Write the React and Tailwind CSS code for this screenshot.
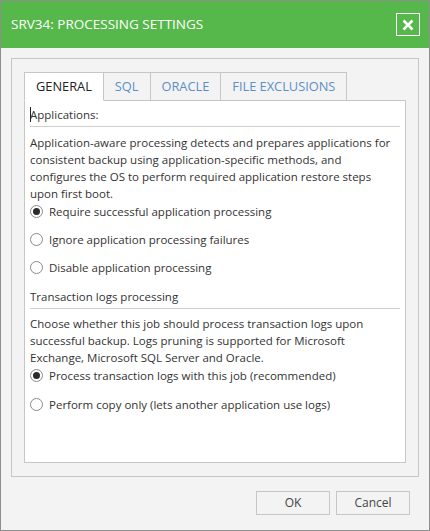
import React, { useState } from "react";

const tabs = ["GENERAL", "SQL", "ORACLE", "FILE EXCLUSIONS"];

const Radio = ({ checked, label, onClick }) => (
  <div className="flex items-center h-[17px] cursor-pointer" onClick={onClick}>
    <span className="w-[13px] h-[13px] rounded-full border border-[#8a8a8a] bg-white flex items-center justify-center shrink-0">
      {checked && <span className="w-[7px] h-[7px] rounded-full bg-[#2b2b2b]" />}
    </span>
    <span className="ml-[6px]">{label}</span>
  </div>
);

const SectionTitle = ({ children, caret }) => (
  <div className="relative border-b border-[#cfcfcf] pb-[3px] mr-[5px]">
    {caret && <span className="absolute left-0 top-[1px] w-px h-[15px] bg-[#222]" />}
    {children}
  </div>
);

export default function App() {
  const [tab, setTab] = useState("GENERAL");
  const [appMode, setAppMode] = useState("require");
  const [logMode, setLogMode] = useState("process");

  return (
    <div
      className="w-[430px] h-[531px] border border-[#8f8f8f] bg-[#f3f3f3] flex flex-col text-[11.5px] text-[#333]"
      style={{ fontFamily: '"Open Sans", "Noto Sans", sans-serif' }}
    >
      <div className="h-[47px] bg-[#56b84b] flex items-center justify-between pl-[10px] pr-[9px] shrink-0">
        <span className="text-white text-[13.5px]">SRV34: PROCESSING SETTINGS</span>
        <button className="w-[24px] h-[23px] border border-white flex items-center justify-center">
          <svg width="12" height="12" viewBox="0 0 12 12">
            <path d="M1.5 1.5 L10.5 10.5 M10.5 1.5 L1.5 10.5" stroke="white" strokeWidth="2.6" />
          </svg>
        </button>
      </div>

      <div className="px-[10px] pt-[10px]">
        <div className="h-[419px] border border-[#c6c6c6] px-[12px] pt-[13px] pb-[13px] flex flex-col">
          <div className="flex h-[28px]">
            {tabs.map((t) => (
              <button
                key={t}
                onClick={() => setTab(t)}
                className={`h-[29px] px-[11px] border border-[#c6c6c6] -ml-px first:ml-0 text-[12.8px] ${
                  tab === t
                    ? "bg-white text-[#222] border-b-white relative z-10"
                    : "bg-[#f3f3f3] text-[#5b8fc9]"
                }`}
              >
                {t}
              </button>
            ))}
          </div>
          <div className="flex-1 bg-white border border-[#c6c6c6] pl-[5px] pt-[5px] leading-[17px]">
            <SectionTitle caret>Applications:</SectionTitle>
            <p className="mt-[7px] whitespace-nowrap">
              Application-aware processing detects and prepares applications for
              <br />
              consistent backup using application-specific methods, and
              <br />
              configures the OS to perform required application restore steps
              <br />
              upon first boot.
            </p>
            <div className="mt-[1px] flex flex-col gap-[11px]">
              <Radio
                checked={appMode === "require"}
                onClick={() => setAppMode("require")}
                label="Require successful application processing"
              />
              <Radio
                checked={appMode === "ignore"}
                onClick={() => setAppMode("ignore")}
                label="Ignore application processing failures"
              />
              <Radio
                checked={appMode === "disable"}
                onClick={() => setAppMode("disable")}
                label="Disable application processing"
              />
            </div>
            <div className="mt-[12px]">
              <SectionTitle>Transaction logs processing</SectionTitle>
            </div>
            <p className="mt-[6px] whitespace-nowrap">
              Choose whether this job should process transaction logs upon
              <br />
              successful backup. Logs pruning is supported for Microsoft
              <br />
              Exchange, Microsoft SQL Server and Oracle.
            </p>
            <div className="mt-[1px] flex flex-col gap-[12px]">
              <Radio
                checked={logMode === "process"}
                onClick={() => setLogMode("process")}
                label="Process transaction logs with this job (recommended)"
              />
              <Radio
                checked={logMode === "copy"}
                onClick={() => setLogMode("copy")}
                label="Perform copy only (lets another application use logs)"
              />
            </div>
          </div>
        </div>
      </div>

      <div className="flex justify-end gap-[6px] pr-[19px] mt-[14px]">
        <button className="w-[74px] h-[24px] border border-[#c6c6c6] bg-[#f3f3f3] text-[#444] text-[12px]">OK</button>
        <button className="w-[74px] h-[24px] border border-[#c6c6c6] bg-[#f3f3f3] text-[#444] text-[12px]">Cancel</button>
      </div>
    </div>
  );
}
